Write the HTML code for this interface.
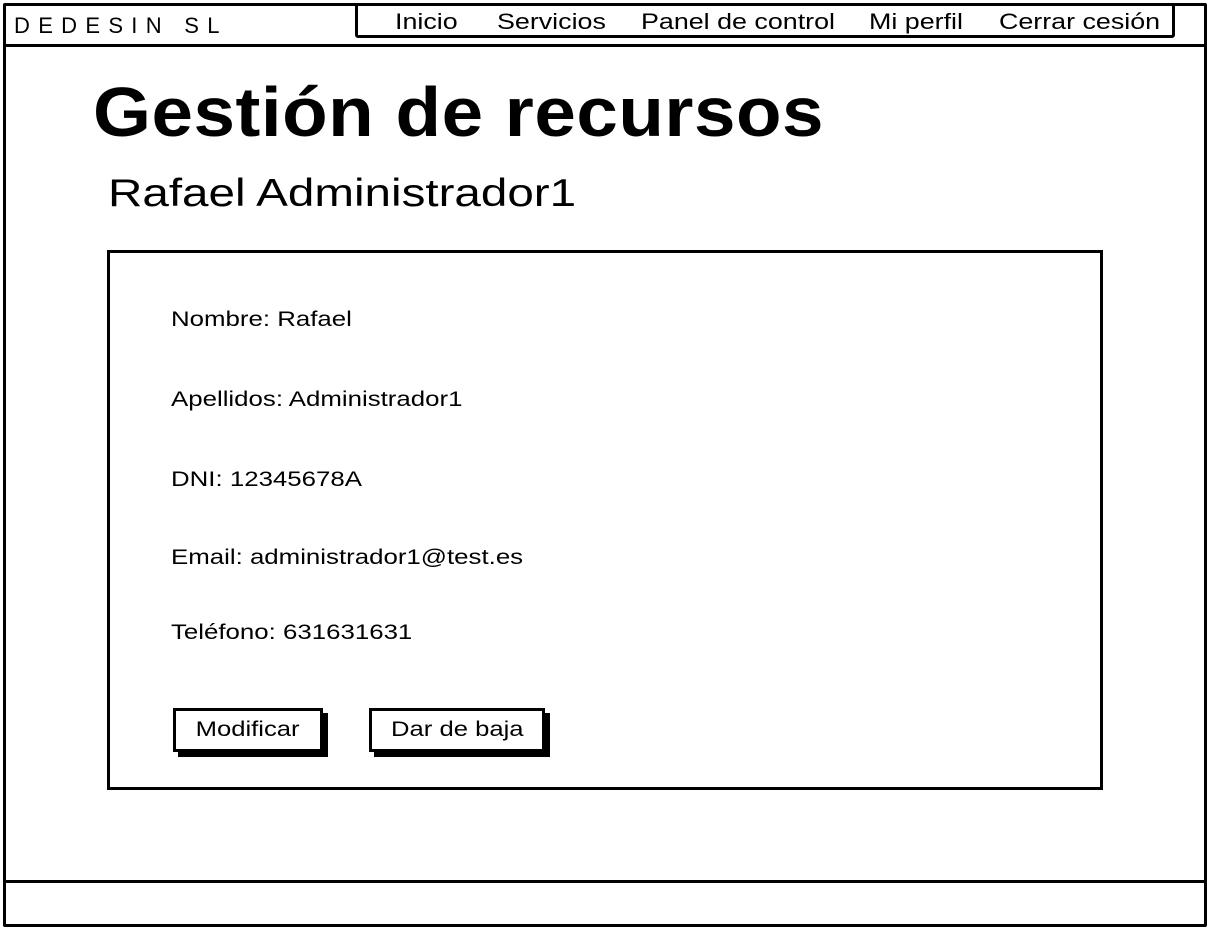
<!DOCTYPE html>
<html><head><meta charset="utf-8"><style>
*{margin:0;padding:0;box-sizing:border-box}
body{width:1210px;height:930px;background:#fff;position:relative;font-family:"Liberation Sans",sans-serif;color:#000;overflow:hidden}
.abs{position:absolute}
.frame{left:3px;top:3px;width:1204px;height:924px;border:3px solid #000;border-radius:2px}
.hline{left:3px;width:1204px;height:3px;background:#000}
.nav{left:355px;top:3px;width:820px;height:35px;border:3px solid #000;border-radius:3px}
.nav span{position:absolute;top:3px;font-size:22px;white-space:nowrap;transform:scaleX(1.22);transform-origin:left}
.logo{left:14px;top:13px;font-size:22px;letter-spacing:8.3px}
.box{left:107px;top:250px;width:996px;height:540px;border:3px solid #000}
.t{position:absolute;left:171px;font-size:21px;white-space:nowrap;transform:scaleX(1.23);transform-origin:left}
.btn{position:absolute;top:708px;height:44px;border:3px solid #000;background:#fff;box-shadow:5px 5px 0 #000;font-size:21px;text-align:center;line-height:38px}
.btn span{display:inline-block;transform:scaleX(1.22)}
</style></head><body>
<div class="abs frame"></div>
<div class="abs hline" style="top:44px"></div>
<div class="abs hline" style="top:880px"></div>
<div class="abs logo">DEDESIN SL</div>
<div class="abs nav">
<span style="left:37px">Inicio</span>
<span style="left:139px">Servicios</span>
<span style="left:283px">Panel de control</span>
<span style="left:511px">Mi perfil</span>
<span style="left:641px">Cerrar cesión</span>
</div>
<div class="abs" style="left:93px;top:72px;font-size:70px;font-weight:bold;white-space:nowrap;letter-spacing:0.5px;transform:scaleX(1.065);transform-origin:left">Gestión de recursos</div>
<div class="abs" style="left:108px;top:172px;font-size:39px;white-space:nowrap;transform:scaleX(1.22);transform-origin:left">Rafael Administrador1</div>
<div class="abs box"></div>
<div class="t" style="top:308px">Nombre: Rafael</div>
<div class="t" style="top:388px">Apellidos: Administrador1</div>
<div class="t" style="top:468px">DNI: 12345678A</div>
<div class="t" style="top:546px">Email: administrador1@test.es</div>
<div class="t" style="top:621px">Teléfono: 631631631</div>
<div class="btn" style="left:173px;width:150px"><span>Modificar</span></div>
<div class="btn" style="left:369px;width:176px"><span>Dar de baja</span></div>
</body></html>
